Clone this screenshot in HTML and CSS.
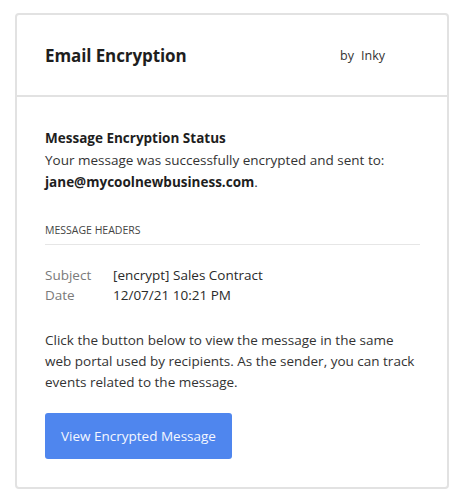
FILE: index.html
```html
<!DOCTYPE html>
<html lang="en">
<head>
<meta charset="utf-8">
<title>Email Encryption</title>
<link rel="stylesheet" href="styles.css">
</head>
<body>
<div class="card">
  <div class="card-header">
    <h1 class="title">Email Encryption</h1>
    <div class="brand"><span class="by">by</span><span class="name">Inky</span></div>
  </div>
  <div class="card-body">
    <div class="status">
      <div class="status-title">Message Encryption Status</div>
      <div>Your message was successfully encrypted and sent to:</div>
      <div><strong>jane@mycoolnewbusiness.com</strong>.</div>
    </div>
    <div class="section-label">MESSAGE HEADERS</div>
    <div class="headers">
      <div class="h-label">Subject</div><div class="h-value">[encrypt] Sales Contract</div>
      <div class="h-label">Date</div><div class="h-value">12/07/21 10:21 PM</div>
    </div>
    <p class="info">Click the button below to view the message in the same web portal used by recipients. As the sender, you can track events related to the message.</p>
    <a class="btn" href="#">View Encrypted Message</a>
  </div>
</div>
</body>
</html>
```
FILE: styles.css
```css
html, body {
  margin: 0;
  padding: 0;
  background: #ffffff;
}
body {
  padding: 13px 0 0 15px;
  font-family: "Open Sans", "Noto Sans", sans-serif;
  color: #222222;
}
.card {
  box-sizing: border-box;
  width: 434px;
  height: 476px;
  border: 2px solid #e2e2e2;
  border-radius: 4px;
  display: flex;
  flex-direction: column;
}
.card-header {
  box-sizing: border-box;
  height: 82px;
  border-bottom: 2px solid #e2e2e2;
  display: flex;
  align-items: center;
  justify-content: space-between;
  padding: 0 62px 0 28px;
}
.title {
  margin: 0;
  font-size: 17px;
  font-weight: 700;
  color: #1e1e1e;
  letter-spacing: -0.1px;
}
.brand {
  font-size: 12.5px;
  color: #333333;
  display: flex;
  gap: 7px;
}
.card-body {
  padding: 30px 27px 0 28px;
  font-size: 13.5px;
  line-height: 21px;
}
.status {
  color: #333333;
  line-height: 22px;
}
.status-title {
  font-weight: 700;
  color: #1e1e1e;
}
.status strong {
  color: #1e1e1e;
}
.section-label {
  margin-top: 27px;
  font-size: 10.5px;
  color: #444444;
  padding-bottom: 3px;
  border-bottom: 1px solid #e6e6e6;
}
.headers {
  margin-top: 20px;
  display: grid;
  grid-template-columns: 68px 1fr;
  line-height: 20px;
}
.h-label {
  color: #7a7a7a;
}
.h-value {
  color: #2a2a2a;
}
.info {
  margin: 25px 0 0 0;
  color: #333333;
}
.btn {
  display: inline-block;
  margin-top: 20px;
  padding: 0 16px;
  height: 46px;
  line-height: 46px;
  background: #4f86ee;
  color: #f4f7ff;
  text-decoration: none;
  border-radius: 3px;
  font-size: 13.5px;
}
```
